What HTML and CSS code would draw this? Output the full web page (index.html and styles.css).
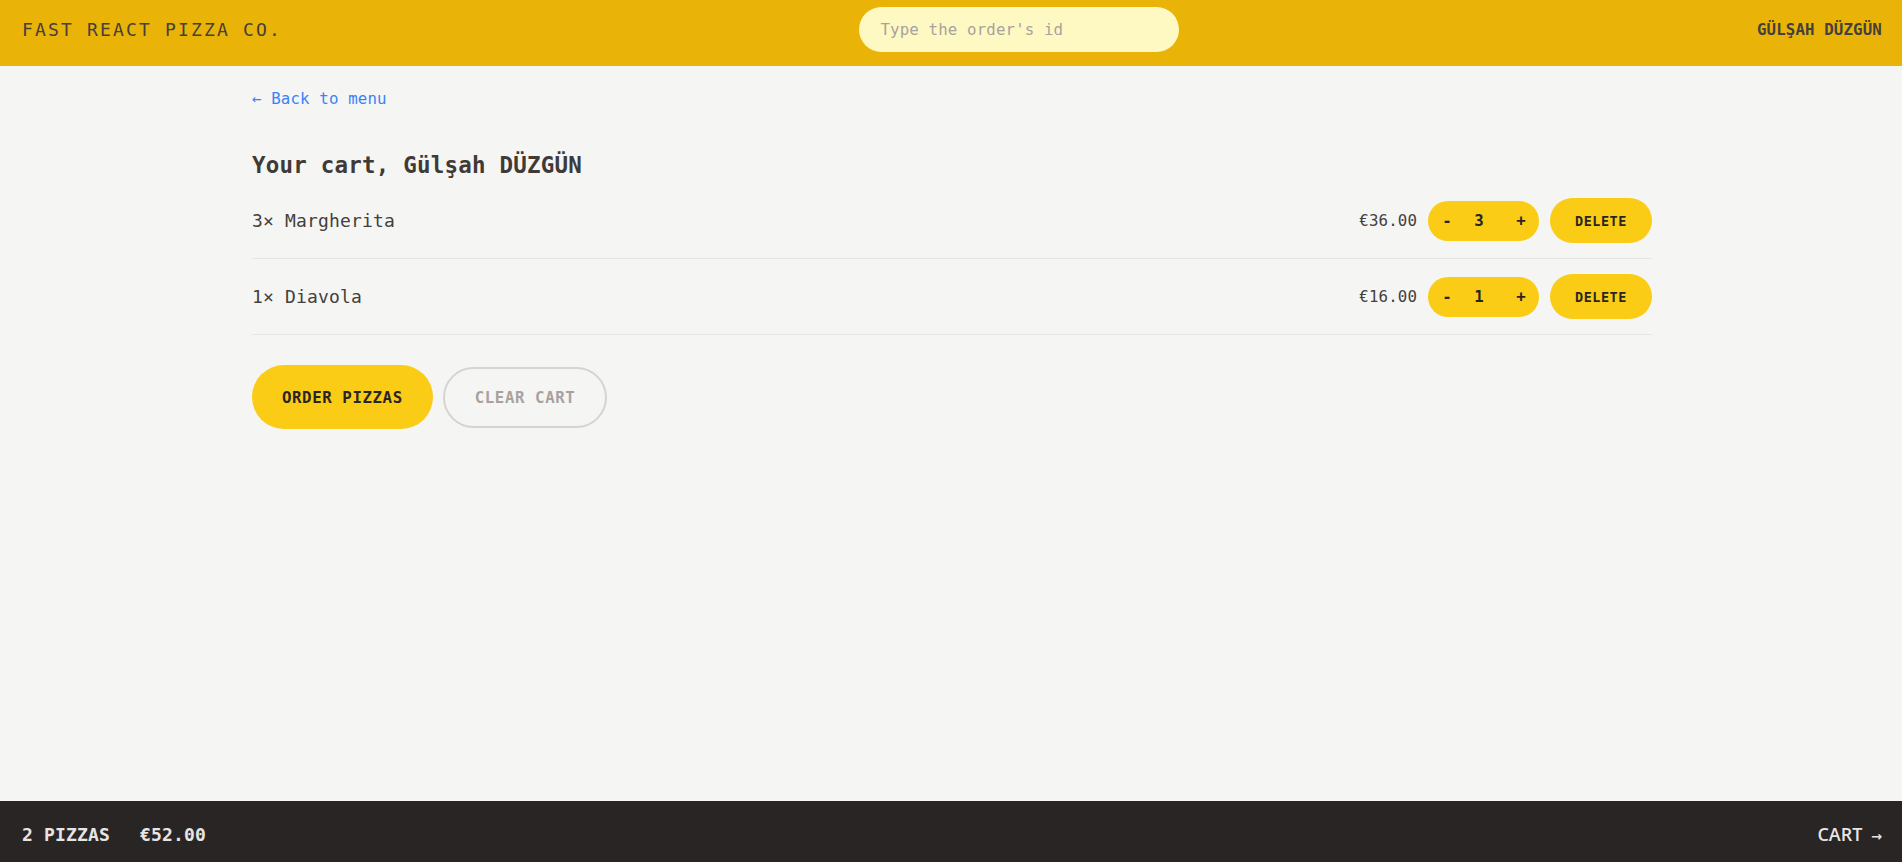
FILE: index.html
```html
<!DOCTYPE html>
<html lang="en">
<head>
<meta charset="utf-8">
<title>Fast React Pizza Co.</title>
<link rel="stylesheet" href="styles.css">
</head>
<body>
<div class="app">
  <header class="header">
    <a class="logo" href="#">Fast React Pizza Co.</a>
    <form class="search">
      <input class="search-input" type="text" placeholder="Type the order's id">
    </form>
    <div class="username">Gülşah Düzgün</div>
  </header>

  <main class="main">
    <div class="container">
      <a class="back-link" href="#">&larr; Back to menu</a>
      <h2 class="cart-title">Your cart, Gülşah DÜZGÜN</h2>

      <ul class="cart-list">
        <li class="cart-item">
          <p class="item-name">3&times; Margherita</p>
          <div class="item-actions">
            <p class="item-price">€36.00</p>
            <div class="qty">
              <button class="qty-btn">-</button>
              <span class="qty-num">3</span>
              <button class="qty-btn qty-plus">+</button>
            </div>
            <button class="btn-small">Delete</button>
          </div>
        </li>
        <li class="cart-item">
          <p class="item-name">1&times; Diavola</p>
          <div class="item-actions">
            <p class="item-price">€16.00</p>
            <div class="qty">
              <button class="qty-btn">-</button>
              <span class="qty-num">1</span>
              <button class="qty-btn qty-plus">+</button>
            </div>
            <button class="btn-small">Delete</button>
          </div>
        </li>
      </ul>

      <div class="cart-actions">
        <button class="btn-primary">Order pizzas</button>
        <button class="btn-secondary">Clear cart</button>
      </div>
    </div>
  </main>

  <footer class="overview">
    <p class="overview-stats">
      <span>2 pizzas</span>
      <span>€52.00</span>
    </p>
    <a class="overview-link" href="#">Cart <span class="arrow">&rarr;</span></a>
  </footer>
</div>
</body>
</html>
```

FILE: styles.css
```css
* {
  box-sizing: border-box;
}

html, body {
  margin: 0;
  padding: 0;
}

body {
  background: #f5f5f4;
  color: #44403c;
  font-family: "DejaVu Sans Mono", "Liberation Mono", monospace;
}

p, h2, ul {
  margin: 0;
  padding: 0;
}

a {
  text-decoration: none;
  color: inherit;
}

button {
  font-family: inherit;
  border: none;
  cursor: pointer;
}

.app {
  display: flex;
  flex-direction: column;
  height: 100vh;
}

/* Header */
.header {
  height: 66px;
  flex: none;
  background: #eab308;
  display: flex;
  align-items: center;
  justify-content: space-between;
  padding: 0 20px 7px 22px;
  text-transform: uppercase;
}

.logo {
  font-size: 18px;
  letter-spacing: 2.16px;
  line-height: 25px;
  color: #44403c;
}

.search {
  margin: 0;
}

.search-input {
  width: 320px;
  height: 45px;
  border: none;
  outline: none;
  border-radius: 9999px;
  background: #fef9c3;
  padding: 0 21px;
  font-family: inherit;
  font-size: 15.75px;
  letter-spacing: 0.14px;
  color: #44403c;
}

.search-input::placeholder {
  color: #a8a29e;
}

.username {
  font-size: 15.75px;
  letter-spacing: 0.14px;
  font-weight: 700;
  line-height: 25px;
  color: #44403c;
}

/* Main */
.main {
  flex: 1;
  overflow: auto;
  padding-left: 2px;
}

.container {
  width: 1400px;
  margin: 0 auto;
  padding-top: 20px;
}

.back-link {
  display: block;
  font-size: 15.75px;
  letter-spacing: 0.14px;
  line-height: 25px;
  color: #3b82f6;
}

.cart-title {
  margin-top: 37px;
  font-size: 22.5px;
  letter-spacing: 0.2px;
  line-height: 35px;
  font-weight: 700;
  color: #3f3a36;
}

.cart-list {
  list-style: none;
}

.cart-item {
  display: flex;
  align-items: center;
  justify-content: space-between;
  padding: 15px 0;
  border-bottom: 1px solid #e7e5e4;
}

.item-name {
  font-size: 18px;
  letter-spacing: 0.16px;
  line-height: 30px;
}

.item-actions {
  display: flex;
  align-items: center;
  gap: 11px;
}

.item-price {
  font-size: 15.75px;
  letter-spacing: 0.14px;
  line-height: 25px;
}

.qty {
  display: grid;
  grid-template-columns: 38px 26px 47px;
  align-items: center;
  height: 40px;
  width: 111px;
  border-radius: 9999px;
  background: #facc15;
  color: #292524;
}

.qty-btn {
  background: transparent;
  padding: 0;
  font-size: 15.75px;
  font-weight: 700;
  color: #292524;
  line-height: 25px;
  text-align: center;
}

.qty-plus {
  padding-left: 11px;
}

.qty-num {
  font-size: 15.75px;
  font-weight: 700;
  text-align: center;
  line-height: 25px;
}

.btn-small {
  height: 45px;
  width: 102px;
  border-radius: 9999px;
  background: #facc15;
  color: #292524;
  font-size: 13.5px;
  letter-spacing: 0.5px;
  font-weight: 700;
  text-transform: uppercase;
  padding: 0;
}

.cart-actions {
  display: flex;
  align-items: center;
  gap: 10px;
  margin-top: 30px;
}

.btn-primary {
  height: 64px;
  padding: 0 30px;
  border-radius: 9999px;
  background: #facc15;
  color: #292524;
  font-size: 15.75px;
  letter-spacing: 0.58px;
  font-weight: 700;
  text-transform: uppercase;
}

.btn-secondary {
  height: 61px;
  padding: 0 30px;
  border-radius: 9999px;
  background: transparent;
  border: 2px solid #d6d3d1;
  color: #a8a29e;
  font-size: 15.75px;
  letter-spacing: 0.58px;
  font-weight: 700;
  text-transform: uppercase;
}

/* Footer */
.overview {
  flex: none;
  height: 61px;
  background: #292524;
  color: #e7e5e4;
  display: flex;
  align-items: center;
  justify-content: space-between;
  padding: 7px 20px 0 22px;
  text-transform: uppercase;
}

.overview-stats {
  display: flex;
  gap: 30px;
  font-size: 18px;
  letter-spacing: 0.16px;
  font-weight: 700;
  line-height: 30px;
}

.overview-link {
  font-family: "Open Sans", "Noto Sans", sans-serif;
  font-size: 18px;
  font-weight: 600;
  line-height: 30px;
  color: #e7e5e4;
}

.arrow {
  font-family: "DejaVu Sans", sans-serif;
  font-size: 13px;
  font-weight: 700;
  margin-left: 4px;
}
```
